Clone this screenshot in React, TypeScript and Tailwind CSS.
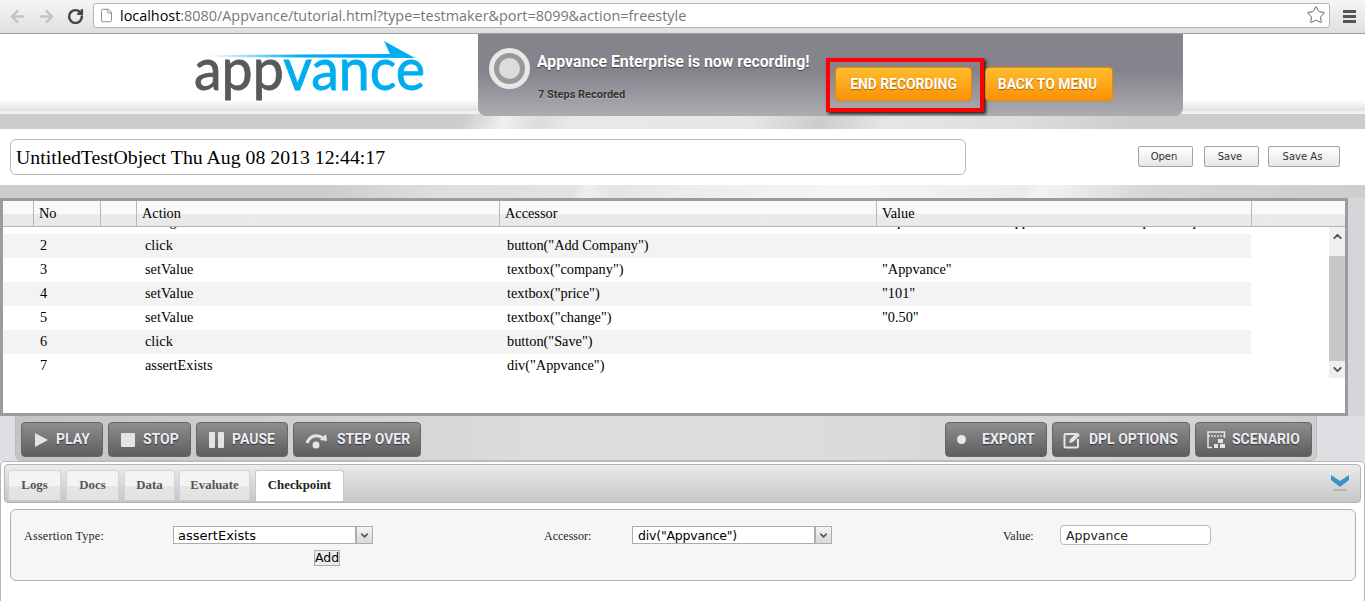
import { ArrowLeft, ArrowRight, ChevronDown, ChevronUp, File, RotateCw, Star } from 'lucide-react';
import type { ReactNode } from 'react';

const rows = [
  { no: '2', action: 'click', accessor: 'button("Add Company")', value: '' },
  { no: '3', action: 'setValue', accessor: 'textbox("company")', value: '"Appvance"' },
  { no: '4', action: 'setValue', accessor: 'textbox("price")', value: '"101"' },
  { no: '5', action: 'setValue', accessor: 'textbox("change")', value: '"0.50"' },
  { no: '6', action: 'click', accessor: 'button("Save")', value: '' },
  { no: '7', action: 'assertExists', accessor: 'div("Appvance")', value: '' },
];

const PlayIcon = () => (
  <svg width="15" height="16" viewBox="0 0 15 16"><path d="M1 1 14 8 1 15Z" fill="#e4e4e4" /></svg>
);
const StopIcon = () => <span className="block w-[14px] h-[14px] rounded-[1px] bg-[#e4e4e4]" />;
const PauseIcon = () => (
  <span className="flex gap-[3px]">
    <span className="block w-[6px] h-[16px] rounded-[1px] bg-[#e4e4e4]" />
    <span className="block w-[6px] h-[16px] rounded-[1px] bg-[#e4e4e4]" />
  </span>
);
const StepIcon = () => (
  <svg width="23" height="18" viewBox="0 0 23 18" fill="none">
    <path d="M2 12C5 4 13 3 18 7" stroke="#e4e4e4" strokeWidth="3" />
    <path d="M15 9 22 10 21 3Z" fill="#e4e4e4" />
    <circle cx="11" cy="14" r="3.5" fill="#e4e4e4" />
  </svg>
);
const DotIcon = () => <span className="block w-[9px] h-[9px] rounded-full bg-[#e8e8e8]" />;
const EditIcon = () => (
  <svg width="18" height="18" viewBox="0 0 18 18" fill="none">
    <path d="M13 3H2.500A1 1 0 0 0 1.500 4V15.500A1 1 0 0 0 2.500 16.500H14A1 1 0 0 0 15 15.500V8" stroke="#e4e4e4" strokeWidth="2" />
    <path d="M6 12 7 8.500 14 1.500 17 4 10 11Z" fill="#e4e4e4" />
  </svg>
);
const ScenarioIcon = () => (
  <svg width="19" height="18" viewBox="0 0 19 18" fill="none">
    <path d="M5 16.500H1V1H17.500V7" stroke="#e4e4e4" strokeWidth="1.500" />
    <path d="M1 5H17.500" stroke="#e4e4e4" strokeWidth="1.500" strokeDasharray="2 1" />
    <rect x="11" y="8" width="5" height="4" fill="#e4e4e4" />
    <rect x="7" y="13" width="4" height="4" fill="#e4e4e4" />
    <rect x="13" y="13" width="5" height="4" fill="#e4e4e4" />
  </svg>
);

const ToolButton = ({ icon, label, className }: { icon: ReactNode; label: string; className: string }) => (
  <button className={`h-[35px] flex items-center rounded-[4px] border border-[#666] bg-gradient-to-b from-[#8e8e8e] to-[#5e5e5e] text-[14px] font-bold text-[#ececf4] [text-shadow:0_1px_1px_#333] ${className}`}>
    {icon}
    <span>{label}</span>
  </button>
);

const NativeSelect = ({ value, className, textClass }: { value: string; className: string; textClass: string }) => (
  <div className={`h-[18px] flex border border-[#adadad] bg-white ${className}`}>
    <select defaultValue={value} className={`flex-1 min-w-0 appearance-none pt-[2px] leading-[14px] text-black outline-none font-['DejaVu_Sans',sans-serif] ${textClass}`}>
      <option>{value}</option>
    </select>
    <span className="w-[17px] flex items-center justify-center border-2 border-[#adadad] border-r-0 border-y-0 bg-gradient-to-b from-[#f4f4f4] to-[#d8d8d8]">
      <ChevronDown size={11} strokeWidth={3.5} className="text-[#555]" />
    </span>
  </div>
);

const tabClass = "h-[30px] mb-[2px] flex items-center justify-center rounded-t-[3px] border border-b-0 border-[#d4d4d4] bg-[linear-gradient(180deg,#f3f3f3_50%,#e6e6e6_51%,#e2e2e2)]";

const App = () => {
  return (
    <div className="w-[1365px] h-[601px] overflow-hidden bg-white font-['Roboto',sans-serif]">
      {/* browser bar */}
      <div className="h-[34px] flex items-center border-b border-[#a0a0a0] bg-gradient-to-b from-[#f5f5f5] to-[#e0e0e0]">
        <ArrowLeft size={19} strokeWidth={3} className="ml-[8px] text-[#c4c4c4]" />
        <ArrowRight size={19} strokeWidth={3} className="ml-[10px] text-[#c4c4c4]" />
        <RotateCw size={17} strokeWidth={3.5} className="ml-[11px] text-[#444]" />
        <div className="ml-[9px] mb-[3px] h-[25px] w-[1237px] flex items-center rounded-[3px] border border-[#b4b4b4] bg-white text-[14.400px] text-[#777] font-['Open_Sans',sans-serif]">
          <File size={15} strokeWidth={1.5} className="ml-[5px] text-[#888]" />
          <span className="ml-[6px] mt-[1px]"><span className="text-black">localhost</span>:8080/Appvance/tutorial.html?type=testmaker&port=8099&action=freestyle</span>
          <Star size={20} strokeWidth={1.2} className="ml-auto mr-[3px] text-[#666]" />
        </div>
        <div className="ml-[13px] w-[13px] flex flex-col gap-[2px]">
          <span className="h-[3px] bg-[#555]" />
          <span className="h-[3px] bg-[#555]" />
          <span className="h-[3px] bg-[#555]" />
        </div>
      </div>

      {/* logo and recording panel */}
      <div className="h-[80px] flex bg-[linear-gradient(180deg,#fff_82%,#e2e2e2_96%,#f2f2f2_97%)]">
        <svg width="232" height="62" viewBox="0 0 232 62" className="ml-[194px] mt-[6px] shrink-0">
          <defs>
            <linearGradient id="arrowFade" x1="0" x2="1" y1="0" y2="0">
              <stop offset="0" stopColor="#00aeef" stopOpacity="0" />
              <stop offset="0.45" stopColor="#00aeef" />
            </linearGradient>
          </defs>
          <path d="M14 15 196 14 190 1 221 18 14 17Z" fill="url(#arrowFade)" />
          <text y="50" fontFamily="Lato, sans-serif" fontSize="58" textLength="231" lengthAdjust="spacingAndGlyphs" strokeWidth="0.8">
            <tspan fill="#58595b" stroke="#58595b">app</tspan>
            <tspan fill="#00aeef" stroke="#00aeef">vance</tspan>
          </text>
        </svg>
        <div className="relative z-10 ml-[52px] h-[82px] w-[705px] shrink-0 flex items-start rounded-b-[8px] bg-[linear-gradient(180deg,#85838c_45%,#adacb1_100%)]">
          <div className="ml-[11px] mt-[14px] w-[41px] h-[41px] shrink-0 rounded-full border-[5px] border-[#e8e8e8] bg-[#999] flex items-center justify-center">
            <span className="block w-[21px] h-[21px] rounded-full bg-[#dcdcdc]" />
          </div>
          <div className="ml-[7px] mt-[17px] w-[289px] shrink-0">
            <div className="text-[15.800px] leading-[22px] font-bold text-white [text-shadow:0_1px_1px_#444]">Appvance Enterprise is now recording!</div>
            <div className="ml-[1px] mt-[15px] text-[11px] leading-[14px] font-bold text-[#333] [text-shadow:0_1px_1px_#bbb]">7 Steps Recorded</div>
          </div>
          <div className="mt-[24px] h-[54px] w-[158px] shrink-0 border-4 border-[#f00] pl-[5px] pt-[5px] shadow-[2px_2px_3px_#222]">
            <button className="block w-[137px] h-[34px] rounded-[4px] border border-[#e58a00] bg-gradient-to-b from-[#fdbd2c] to-[#fb9100] text-[13.900px] font-bold text-white [text-shadow:0_1px_1px_#a86000]">END RECORDING</button>
          </div>
          <button className="mt-[33px] ml-[1px] w-[128px] h-[34px] pr-[3px] rounded-[4px] border border-[#e58a00] bg-gradient-to-b from-[#fdbd2c] to-[#fb9100] text-[13.900px] font-bold text-white [text-shadow:0_1px_1px_#a86000]">BACK TO MENU</button>
        </div>
      </div>

      {/* band */}
      <div className="h-[15px] bg-[linear-gradient(115deg,#cdcdcd_0%,#cdcdcd_34%,#e4e4e4_36%,#f0f0f0_37%,#dcdcdc_39.500%,#e8e8e8_42%,#e6e6e6_55%,#cccccc_60%,#e6e6e6_65%,#dddddd_75%,#cccccc_83%,#cccccc_100%)]" />

      {/* test name row */}
      <div className="h-[56px] flex items-start bg-white">
        <input
          defaultValue="UntitledTestObject Thu Aug 08 2013 12:44:17"
          className="ml-[10px] mt-[10px] w-[956px] h-[36px] rounded-[6px] border border-[#b8b8b8] pl-[5px] text-[19.800px] text-black outline-none font-['Liberation_Serif',serif]"
        />
        <div className="ml-[172px] mt-[17px] flex text-[10px] text-[#333] font-['DejaVu_Sans',sans-serif]">
          <button className="w-[55px] h-[21px] pr-[3px] rounded-[2px] border border-[#a2a2a2] bg-gradient-to-b from-white to-[#e6e6e6]">Open</button>
          <button className="ml-[11px] w-[55px] h-[21px] pr-[3px] rounded-[2px] border border-[#a2a2a2] bg-gradient-to-b from-white to-[#e6e6e6]">Save</button>
          <button className="ml-[9px] w-[72px] h-[21px] pr-[3px] rounded-[2px] border border-[#a2a2a2] bg-gradient-to-b from-white to-[#e6e6e6]">Save As</button>
        </div>
      </div>

      {/* band */}
      <div className="h-[13px] bg-[linear-gradient(115deg,#cdcdcd_0%,#cdcdcd_24%,#dedede_32%,#e2e2e2_42%,#efefef_43%,#e4e4e4_45%,#ececec_50%,#f6f6f6_62%,#ebebeb_75%,#f4f4f4_76%,#d6d6d6_84%,#cdcdcd_100%)]" />

      {/* steps table */}
      <div className="bg-[#d6d6da] h-[218px]">
        <div className="w-[1348px] h-[218px] flex flex-col border-[3px] border-[#9c9c9c] bg-white font-['Liberation_Serif',serif] text-[14.300px] text-black">
          <div className="h-[26px] shrink-0 grid grid-cols-[30px_67px_36px_363px_377px_375px_1fr] border-b border-[#b4b4b4] bg-[linear-gradient(180deg,#f9f9f9_50%,#ebebeb_51%,#e8e8e8)] leading-[24px]">
            <div />
            <div className="border-l border-[#b8b8b8] pl-[5px]">No</div>
            <div className="border-l border-[#b8b8b8]" />
            <div className="border-l border-[#b8b8b8] pl-[5px]">Action</div>
            <div className="border-l border-[#b8b8b8] pl-[5px]">Accessor</div>
            <div className="border-l border-[#b8b8b8] pl-[5px]">Value</div>
            <div className="border-l border-[#b8b8b8]" />
          </div>
          <div className="relative flex-1 min-h-0 overflow-hidden">
            <div className="w-[1248px]">
              {/* row 1 is scrolled almost out of view, only its descenders show */}
              <div className="h-[7px] overflow-hidden">
                <div className="-mt-[17px] h-[24px] grid grid-cols-[133px_363px_377px_375px] leading-[23px]">
                  <div className="pl-[37px]">1</div>
                  <div className="pl-[9px]">navigateTo</div>
                  <div className="pl-[8px]"></div>
                  <div className="pl-[6px] whitespace-nowrap overflow-hidden">http://localhost:8080/Appvance/tutorial/examples/sample</div>
                </div>
              </div>
              {rows.map((row, i) => (
                <div key={row.no} className={`h-[24px] grid grid-cols-[133px_363px_377px_375px] leading-[23px] ${i % 2 === 0 ? 'bg-[#f3f3f3]' : 'bg-white'}`}>
                  <div className="pl-[37px]">{row.no}</div>
                  <div className="pl-[9px]">{row.action}</div>
                  <div className="pl-[8px]">{row.accessor}</div>
                  <div className="pl-[6px] whitespace-nowrap overflow-hidden">{row.value}</div>
                </div>
              ))}
            </div>
            {/* scrollbar */}
            <div className="absolute top-0 right-0 w-[16px] h-[151px] flex flex-col bg-[#efefef]">
              <div className="h-[29px] flex justify-center pt-[3px]">
                <ChevronUp size={13} strokeWidth={3.5} className="text-[#555]" />
              </div>
              <div className="h-[105px] bg-[#c8c8c8]" />
              <div className="h-[17px] flex justify-center pt-[2px]">
                <ChevronDown size={13} strokeWidth={3.5} className="text-[#555]" />
              </div>
            </div>
          </div>
        </div>
      </div>

      {/* toolbar */}
      <div className="h-[45px] bg-[#dfdfe3] pl-[15px] pr-[48px]">
        <div className="h-[45px] flex items-start pt-[6px] pl-[5px] pr-[4px] rounded-b-[6px] border border-t-0 border-[#bdbdbd] bg-[linear-gradient(90deg,#c4c4c4,#dcdcdc_40%,#dcdcdc_60%,#cfcfcf)]">
          <ToolButton icon={<PlayIcon />} label="PLAY" className="w-[82px] pl-[12px] gap-[7px]" />
          <ToolButton icon={<StopIcon />} label="STOP" className="ml-[5px] w-[83px] pl-[12px] gap-[8px]" />
          <ToolButton icon={<PauseIcon />} label="PAUSE" className="ml-[5px] w-[92px] pl-[12px] gap-[8px]" />
          <ToolButton icon={<StepIcon />} label="STEP OVER" className="ml-[5px] w-[128px] pl-[11px] gap-[9px]" />
          <ToolButton icon={<DotIcon />} label="EXPORT" className="ml-auto w-[102px] pl-[11px] gap-[16px]" />
          <ToolButton icon={<EditIcon />} label="DPL OPTIONS" className="ml-[5px] w-[138px] pl-[10px] gap-[8px]" />
          <ToolButton icon={<ScenarioIcon />} label="SCENARIO" className="ml-[5px] w-[117px] pl-[11px] gap-[6px]" />
        </div>
      </div>

      {/* bottom tabs */}
      <div className="h-[140px] rounded-tl-[4px] rounded-tr-[4px] border border-b-0 border-[#b8b8b8] font-['Liberation_Serif',serif] bg-white pt-[2px] px-[3px]">
        <div className="relative h-[39px] flex items-end gap-[5px] rounded-[4px] border border-[#b4b4b4] bg-gradient-to-b from-[#ebebeb] to-[#c6c6c6] pl-[3px] text-[12.800px] font-bold text-[#555]">
          <div className={`w-[53px] ${tabClass}`}>Logs</div>
          <div className={`w-[53px] ${tabClass}`}>Docs</div>
          <div className={`w-[51px] ${tabClass}`}>Data</div>
          <div className={`w-[71px] -ml-[1px] ${tabClass}`}>Evaluate</div>
          <div className="w-[89px] h-[31px] mb-[1px] flex items-center justify-center rounded-t-[3px] border border-b-0 border-[#c8c8c8] bg-white text-[#222]">Checkpoint</div>
          <svg width="18" height="18" viewBox="0 0 18 18" className="absolute right-[11px] top-[9px]">
            <path d="M0 1 9 7 18 1V6L9 13 0 6Z" fill="#3a93c8" />
            <path d="M2 16H16" stroke="#aaa" strokeWidth="1.500" />
          </svg>
        </div>
        <div className="mt-[6px] ml-[6px] w-[1346px] h-[72px] flex items-start rounded-[6px] border border-[#b0b0b0] bg-[#f6f6f6] text-[12px] text-[#222]">
          <span className="ml-[13px] mt-[19px] w-[149px] leading-[14px] tracking-[0.27px]">Assertion Type:</span>
          <div className="mt-[16px] w-[200px] shrink-0 flex flex-col">
            <NativeSelect value="assertExists" className="w-[200px]" textClass="pl-[4px] text-[13px]" />
            <button className="mt-[6px] ml-[141px] w-[26px] h-[16px] border border-[#adadad] bg-[#ececec] text-[12.500px] leading-[14px] text-black font-['DejaVu_Sans',sans-serif]">Add</button>
          </div>
          <span className="ml-[171px] mt-[19px] w-[88px] leading-[14px]">Accessor:</span>
          <NativeSelect value={'div("Appvance")'} className="mt-[16px] w-[200px] shrink-0" textClass="pl-[5px] text-[12.500px] tracking-[-0.2px]" />
          <span className="ml-[171px] mt-[19px] w-[57px] leading-[14px]">Value:</span>
          <input
            defaultValue="Appvance"
            className="mt-[15px] w-[151px] h-[20px] rounded-[4px] border border-[#bbb] bg-white pl-[5px] pt-[1px] text-[12.500px] text-[#222] outline-none font-['DejaVu_Sans',sans-serif]"
          />
        </div>
      </div>
    </div>
  );
};

export default App;
